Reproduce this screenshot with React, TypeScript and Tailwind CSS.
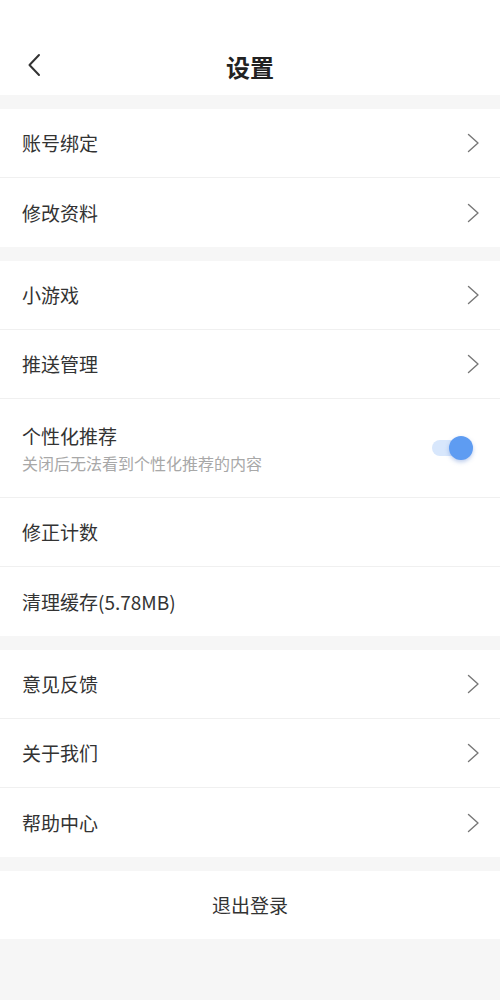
const font = "font-['Noto_Sans_CJK_SC','Noto_Sans',sans-serif]";

type Item = { label: string; sub?: string; arrow?: boolean; toggle?: boolean };

const groups: Item[][] = [
  [
    { label: "账号绑定", arrow: true },
    { label: "修改资料", arrow: true },
  ],
  [
    { label: "小游戏", arrow: true },
    { label: "推送管理", arrow: true },
    { label: "个性化推荐", sub: "关闭后无法看到个性化推荐的内容", toggle: true },
    { label: "修正计数" },
    { label: "清理缓存(5.78MB)" },
  ],
  [
    { label: "意见反馈", arrow: true },
    { label: "关于我们", arrow: true },
    { label: "帮助中心", arrow: true },
  ],
];

export default function App() {
  return (
    <div className={`min-h-[1000px] w-full bg-[#f6f6f6] text-[#333] ${font}`}>
      {/* Header */}
      <header className="relative flex h-[95px] items-end justify-center bg-white pb-[16px]">
        <button className="absolute left-[22px] top-[50px] flex h-[30px] w-[24px] items-center justify-center">
          <svg width="14" height="24" viewBox="0 0 14 24" fill="none">
            <path d="M12 2 L2.5 12 L12 22" stroke="#333" strokeWidth="2" strokeLinecap="round" strokeLinejoin="round" />
          </svg>
        </button>
        <h1 className="text-[24px] font-bold leading-[24px] text-[#222]">设置</h1>
      </header>

      {groups.map((g, gi) => (
        <section key={gi} className="mt-[14px] bg-white">
          {g.map((it, i) => (
            <Row key={it.label} item={it} last={i === g.length - 1} />
          ))}
        </section>
      ))}

      {/* Logout */}
      <section className="mt-[14px] flex h-[68px] items-center justify-center bg-white">
        <span className="text-[19px]">退出登录</span>
      </section>
    </div>
  );
}

// ---- Row ----
function Row({ item, last }: { item: Item; last: boolean }) {
  return (
    <div
      className={
        (item.sub ? "h-[99px] " : "h-[69px] ") +
        "flex items-center justify-between pl-[22px] pr-[20px] " +
        (last ? "" : "border-b border-[#f0f0f0]")
      }
    >
      <div className="flex flex-col">
        <span className="text-[19px] leading-[26px]">{item.label}</span>
        {item.sub && (
          <span className="mt-[3px] text-[16px] leading-[22px] text-[#a8a8a8]">{item.sub}</span>
        )}
      </div>
      {item.arrow && (
        <svg width="14" height="20" viewBox="0 0 14 20" fill="none">
          <path d="M2.5 1.5 L12 10 L2.5 18.5" stroke="#777" strokeWidth="1.4" strokeLinecap="round" strokeLinejoin="round" />
        </svg>
      )}
      {item.toggle && <Toggle />}
    </div>
  );
}

function Toggle() {
  return (
    <div className="relative mr-[10px] h-[16px] w-[38px] rounded-full bg-[#d8e7fc]">
      <div className="absolute right-[-3px] top-[-4px] h-[24px] w-[24px] rounded-full bg-[#5e9cf2] shadow-[0_2px_4px_rgba(60,110,200,0.35)]" />
    </div>
  );
}
